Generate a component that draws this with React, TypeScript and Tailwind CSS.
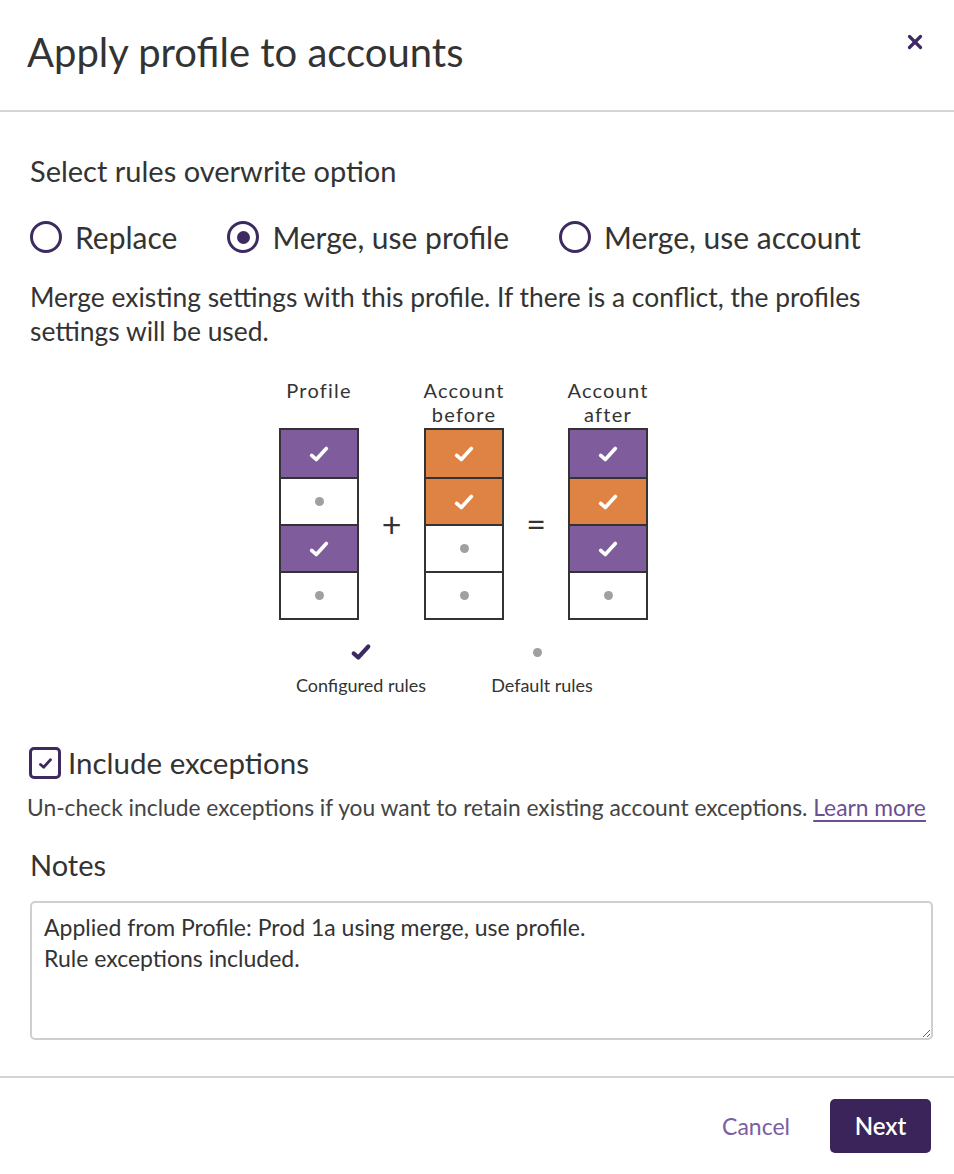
import { X } from 'lucide-react'

const font = { fontFamily: 'Lato, "Open Sans", sans-serif' }

type Cell = 'purple' | 'orange' | 'empty'

function Check({ color = '#ffffff', size = 22, weight = 4 }: { color?: string; size?: number; weight?: number }) {
  return (
    <svg width={size} height={size} viewBox="0 0 24 24" fill="none">
      <path d="M4 13.5l5 4.5L20 6" stroke={color} strokeWidth={weight} strokeLinecap="round" strokeLinejoin="round" />
    </svg>
  )
}

function Column({ title, cells }: { title: React.ReactNode; cells: Cell[] }) {
  return (
    <div className="flex flex-col items-center w-[80px]">
      <div className="h-[48px] mb-[2px] flex flex-col items-center text-[20px] leading-[24px] tracking-[1.2px] text-[#333] whitespace-nowrap">{title}</div>
      <div className="flex flex-col w-[80px] border-2 border-[#333]">
        {cells.map((c, i) => (
          <div
            key={i}
            className={
              'h-[47px] flex items-center justify-center ' +
              (i > 0 ? 'border-t-2 border-[#333] ' : '') +
              (c === 'purple' ? 'bg-[#7f5c9b]' : c === 'orange' ? 'bg-[#de8344]' : 'bg-white')
            }
          >
            {c === 'empty' ? <span className="w-[9px] h-[9px] rounded-full bg-[#a0a0a0]" /> : <Check />}
          </div>
        ))}
      </div>
    </div>
  )
}

function Radio({ label, checked }: { label: string; checked?: boolean }) {
  return (
    <label className="flex items-center gap-[13px]">
      <span className="w-[32px] h-[32px] rounded-full border-[3px] border-[#3d2a61] flex items-center justify-center">
        {checked && <span className="w-[13px] h-[13px] rounded-full bg-[#3d2a61]" />}
      </span>
      <span className="text-[30px] leading-none text-[#333]">{label}</span>
    </label>
  )
}

export default function App() {
  return (
    <div className="w-[954px] h-[1174px] bg-white flex flex-col text-[#333]" style={font}>
      {/* Header */}
      <div className="h-[112px] flex items-start justify-between border-b-2 border-[#d4d4d4] pl-[27px] pr-[28px] shrink-0">
        <h1 className="text-[40px] leading-none mt-[32px] text-[#333]">Apply profile to accounts</h1>
        <X className="mt-[31px] text-[#3d2a61]" size={22} strokeWidth={3.5} />
      </div>

      {/* Body */}
      <div className="flex-1 pl-[30px] pr-[21px]">
        <div className="pt-[44px] text-[29px] leading-none">Select rules overwrite option</div>

        <div className="flex items-center gap-[50px] mt-[36px]">
          <Radio label="Replace" />
          <Radio label="Merge, use profile" checked />
          <Radio label="Merge, use account" />
        </div>

        <p className="mt-[27px] text-[26.4px] leading-[34px] text-[#333]">
          Merge existing settings with this profile. If there is a conflict, the profiles
          <br />
          settings will be used.
        </p>

        {/* Diagram */}
        <div className="flex items-start mt-[30px] pl-[249px]">
          <Column title="Profile" cells={['purple', 'empty', 'purple', 'empty']} />
          <div className="w-[65px] h-[192px] mt-[50px] flex items-center justify-center text-[34px] leading-none text-[#333]">+</div>
          <Column title={<><span>Account</span><span>before</span></>} cells={['orange', 'orange', 'empty', 'empty']} />
          <div className="w-[64px] h-[192px] mt-[50px] flex items-center justify-center text-[34px] leading-none text-[#333]">=</div>
          <Column title={<><span>Account</span><span>after</span></>} cells={['purple', 'orange', 'purple', 'empty']} />
        </div>

        <div className="flex gap-[41px] mt-[21px] pl-[261px]">
          <div className="w-[140px] flex flex-col items-center gap-[11px]">
            <Check color="#3d2a61" size={22} weight={4.5} />
            <span className="text-[18px] leading-[22px] text-[#333] whitespace-nowrap">Configured rules</span>
          </div>
          <div className="w-[140px] flex flex-col items-center gap-[11px]">
            <span className="mt-[7px] mb-[6px] ml-[-10px] w-[9px] h-[9px] rounded-full bg-[#a0a0a0]" />
            <span className="text-[18px] leading-[22px] text-[#333] whitespace-nowrap">Default rules</span>
          </div>
        </div>

        {/* Include exceptions */}
        <label className="flex items-center gap-[7px] mt-[51px] ml-[-1px]">
          <span className="w-[32px] h-[32px] rounded-[5px] border-[3px] border-[#3d2a61] flex items-center justify-center">
            <Check color="#3d2a61" size={15} weight={4.5} />
          </span>
          <span className="text-[29.5px] leading-none text-[#333]">Include exceptions</span>
        </label>
        <p className="mt-[13px] ml-[-3px] text-[22.8px] leading-[30px] text-[#444] whitespace-nowrap">
          Un-check include exceptions if you want to retain existing account exceptions.{' '}
          <a href="#" className="text-[#6b4f92] underline underline-offset-4">Learn more</a>
        </p>

        <div className="mt-[28px] text-[29px] leading-none">Notes</div>
        <textarea
          className="mt-[22px] w-full h-[139px] rounded-[5px] border-2 border-[#cfcfcf] px-[12px] py-[9px] text-[23px] leading-[31px] text-[#333] resize-y outline-none block"
          style={font}
          defaultValue={'Applied from Profile: Prod 1a using merge, use profile.\nRule exceptions included.'}
        />
      </div>

      {/* Footer */}
      <div className="h-[98px] border-t-2 border-[#d4d4d4] flex items-center justify-end gap-[40px] pr-[23px] shrink-0">
        <button className="text-[23px] text-[#7a5ea0]">Cancel</button>
        <button className="h-[54px] w-[101px] rounded-[5px] bg-[#3a2459] text-white text-[24px] font-semibold">Next</button>
      </div>
    </div>
  )
}
